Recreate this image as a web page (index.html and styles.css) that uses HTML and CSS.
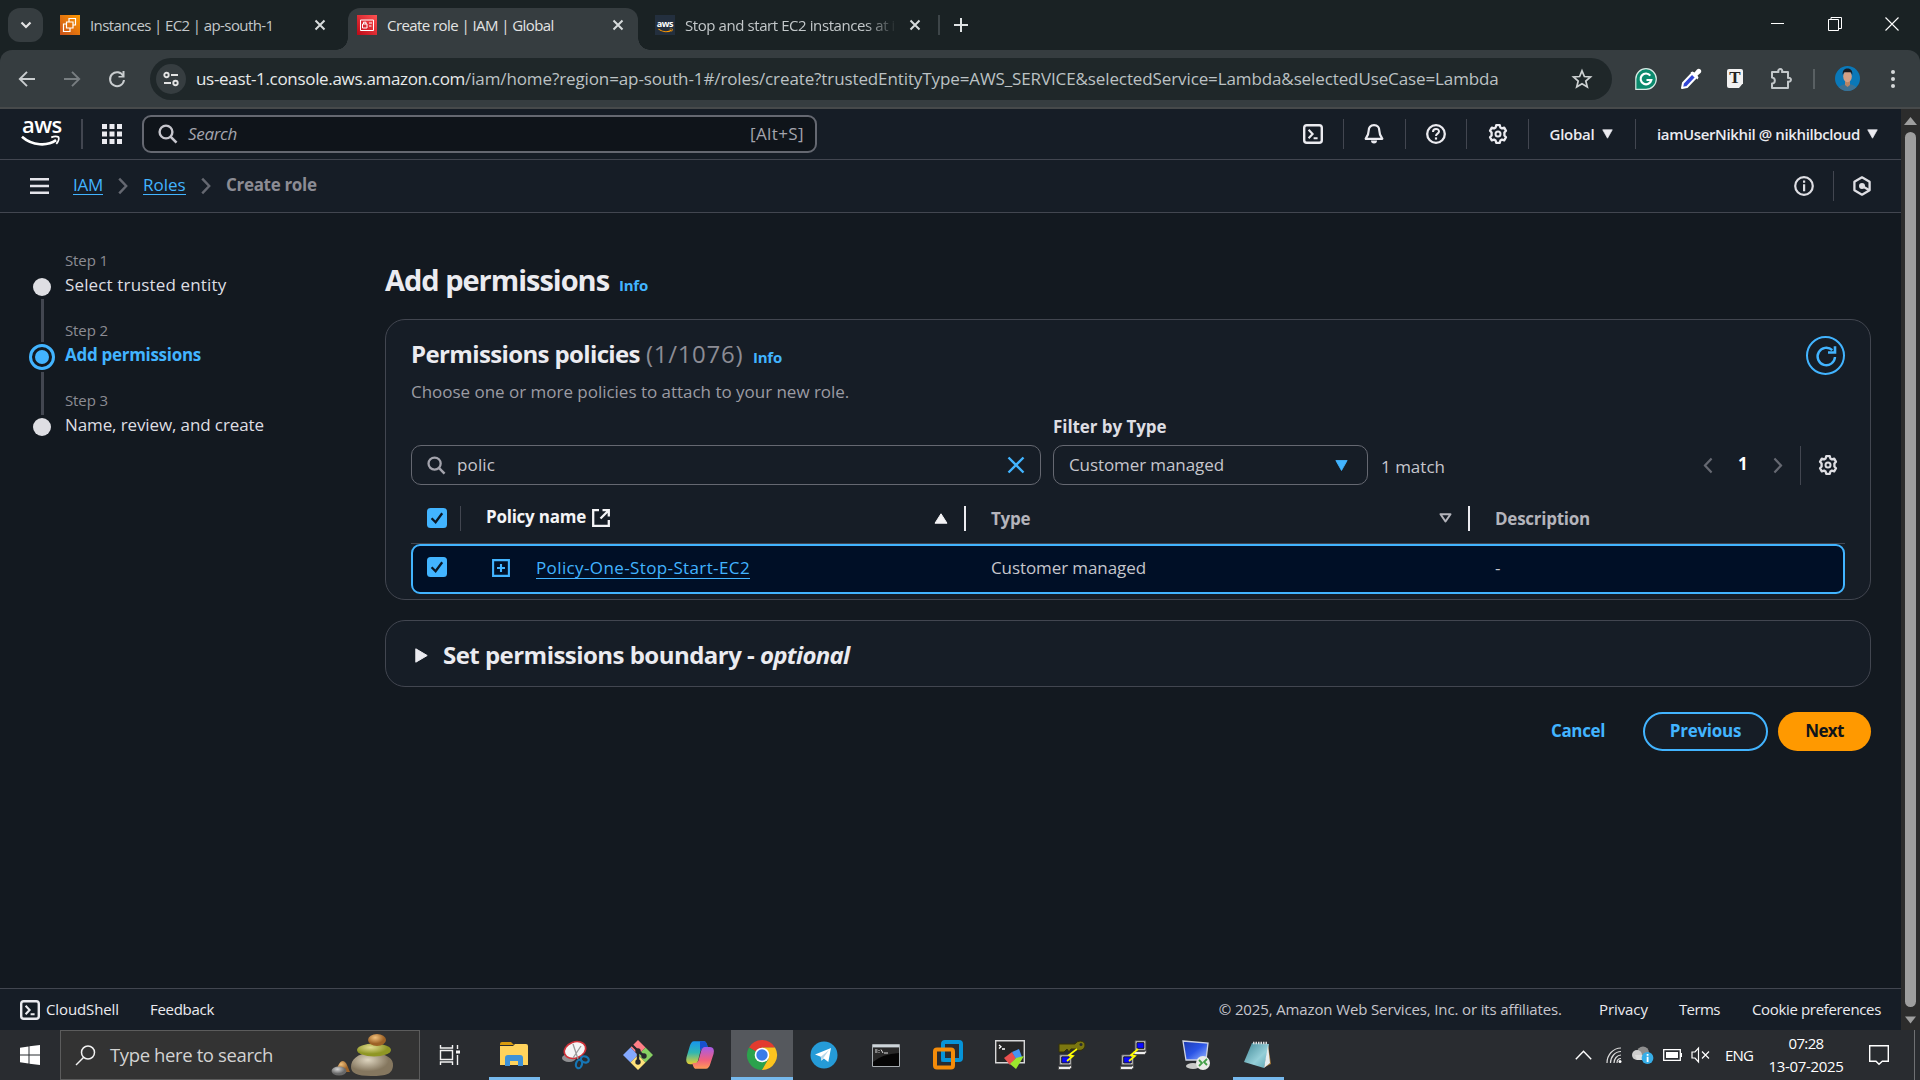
FILE: index.html
```html
<!DOCTYPE html>
<html lang="en">
<head>
<meta charset="utf-8">
<title>Create role | IAM | Global</title>
<link rel="stylesheet" href="styles.css">
</head>
<body>
<svg width="0" height="0" class="defs" aria-hidden="true">
  <defs>
    <symbol id="gear" viewBox="0 0 20 20"><path d="M8.2 1.2h3.6l.6 2.3 1.5.9 2.3-.7 1.8 3.1-1.6 1.7v3l1.6 1.7-1.8 3.1-2.3-.7-1.5.9-.6 2.3H8.2l-.6-2.3-1.5-.9-2.3.7L2 13.2l1.6-1.7v-3L2 6.8l1.8-3.1 2.3.7 1.5-.9z" fill="none" stroke="currentColor" stroke-width="2.3" stroke-linejoin="round"/><circle cx="10" cy="10" r="2.5" fill="none" stroke="currentColor" stroke-width="2"/></symbol>
    <symbol id="shell" viewBox="0 0 20 20"><rect x="1.2" y="1.2" width="17.6" height="17.6" rx="2.6" fill="none" stroke="currentColor" stroke-width="2.4"/><path d="M5.6 5.8l4 4.2-4 4.2M10.6 14.3h4" fill="none" stroke="currentColor" stroke-width="2.1"/></symbol>
    <symbol id="lens" viewBox="0 0 20 20"><circle cx="8" cy="8" r="6.4" fill="none" stroke="currentColor" stroke-width="2.4"/><path d="M12.5 12.6l6 6" stroke="currentColor" stroke-width="2.6" fill="none"/></symbol>
    <symbol id="x" viewBox="0 0 12 12"><path d="M1.5 1.5l9 9m0-9l-9 9" stroke="currentColor" stroke-width="2" fill="none"/></symbol>
    <symbol id="chev" viewBox="0 0 10 18"><path d="M1.2 1.6l7 7.4-7 7.4" stroke="currentColor" stroke-width="2.4" fill="none"/></symbol>
    <symbol id="down" viewBox="0 0 12 10"><path d="M.8.4h10.4L6 9.6z" fill="currentColor" stroke="currentColor" stroke-width=".8" stroke-linejoin="round"/></symbol>
    <symbol id="box" viewBox="0 0 20 20"><rect width="20" height="20" rx="3.5" fill="#42b4ff"/><path d="M4.6 10.2l4 4 6.6-9" fill="none" stroke="#0b1724" stroke-width="2.3"/></symbol>
    <symbol id="smile" viewBox="0 0 40 12"><path d="M1 1.6C12 11.2 27 11.4 36 5.2" fill="none" stroke="currentColor" stroke-width="2.8"/><path d="M31 2.2c3-1.2 6.2-1 7.4-.2.8 1.600-.2 4.900-2.200 7" fill="none" stroke="currentColor" stroke-width="1.900"/></symbol>
    <symbol id="pc" viewBox="0 0 16 17"><path d="M2.500 1h12v10.500h-12z" fill="#d8d8d4" stroke="#555"/><path d="M4.500 3h8v6.500h-8z" fill="#0a0aff" stroke="#111"/><path d="M1 13h12l2-1.500v3L13 16.500H1z" fill="#eee" stroke="#444"/></symbol>
  </defs>
</svg>

<div class="tabs">
  <div class="tab-search"><svg width="12" height="8" viewBox="0 0 12 8"><path d="M1.500 1.500L6 6l4.500-4.500" fill="none" stroke="#e3e3e3" stroke-width="2.200"/></svg></div>
  <div class="tab tab-first">
    <svg class="fav" width="20" height="20" viewBox="0 0 20 20"><defs><linearGradient id="og" x1="0" y1="1" x2="1" y2="0"><stop offset="0" stop-color="#c8511b"/><stop offset="1" stop-color="#f90"/></linearGradient></defs><rect width="20" height="20" fill="url(#og)"/><path d="M6.500 7h6.500v6H6.500zM9 7V3.500h6.500V10H13M6.500 9H3.500v7.500H10V13" fill="none" stroke="#fff" stroke-width="1.200"/></svg>
    <span class="tab-title t-ec2">Instances | EC2 | ap-south-1</span>
    <svg class="tab-x" width="12" height="12"><use href="#x"/></svg>
  </div>
  <div class="tab tab-active">
    <svg class="fav" width="20" height="20" viewBox="0 0 20 20"><defs><linearGradient id="rg" x1="0" y1="1" x2="1" y2="0"><stop offset="0" stop-color="#bd0816"/><stop offset="1" stop-color="#ff5252"/></linearGradient></defs><rect width="20" height="20" fill="url(#rg)"/><path d="M3.500 5h13v10.500h-13zM5.500 9h4.500v4H5.500zM6.500 9V7.200h2.500V9M12 8h3M12 11h2.500" fill="none" stroke="#fff" stroke-width="1"/></svg>
    <span class="tab-title t-iam">Create role | IAM | Global</span>
    <svg class="tab-x" width="12" height="12"><use href="#x"/></svg>
  </div>
  <div class="tab tab-third">
    <div class="fav fav-aws"><span>aws</span><svg width="15" height="5" viewBox="0 0 40 12"><use href="#smile"/></svg></div>
    <span class="tab-title t-stop">Stop and start EC2 instances at i</span>
    <svg class="tab-x" width="12" height="12"><use href="#x"/></svg>
  </div>
  <i class="tab-sep"></i>
  <svg class="plus" width="14" height="14" viewBox="0 0 14 14"><path d="M7 0v14M0 7h14" stroke="#dfe3e4" stroke-width="2"/></svg>
  <div class="win">
    <svg width="14" height="14" viewBox="0 0 14 14"><path d="M0 6.500h13" stroke="#fff"/></svg>
    <svg width="14" height="14" viewBox="0 0 14 14"><path d="M.5 2.500h10v11H.5zM3 2.500v-2h10.500v11h-3" fill="none" stroke="#fff"/></svg>
    <svg width="14" height="14" viewBox="0 0 14 14"><path d="M.5.5l13 13m0-13l-13 13" stroke="#fff" stroke-width="1.100"/></svg>
  </div>
</div>

<div class="toolbar-wrap"><div class="toolbar">
  <svg class="nav" width="18" height="18" viewBox="0 0 18 18"><path d="M17 9H2M9 1.800L1.800 9 9 16.200" fill="none" stroke="#c9cdcf" stroke-width="1.900"/></svg>
  <svg class="nav nav-off" width="18" height="18" viewBox="0 0 18 18"><path d="M1 9h15M9 1.800L16.200 9 9 16.200" fill="none" stroke="#787e81" stroke-width="1.900"/></svg>
  <svg class="nav" width="18" height="18" viewBox="0 0 18 18"><path d="M15.300 6A7 7 0 1 0 16 10" fill="none" stroke="#c9cdcf" stroke-width="2"/><path d="M16.500 1v6.500H10.500v-1.500h4V1z" fill="#c9cdcf"/></svg>
  <div class="omni">
    <div class="site"><svg width="16" height="16" viewBox="0 0 16 16"><g fill="none" stroke="#e3e3e3" stroke-width="1.900"><circle cx="3.500" cy="4" r="2.200"/><path d="M8 4h7M1 12h7"/><circle cx="12.500" cy="12" r="2.200"/></g></svg></div>
    <div class="url"><span class="host">us-east-1.console.aws.amazon.com</span><span class="path">/iam/home?region=ap-south-1#/roles/create?trustedEntityType=AWS_SERVICE&amp;selectedService=Lambda&amp;selectedUseCase=Lambda</span></div>
    <svg class="star" width="20" height="20" viewBox="0 0 20 20"><path d="M10 1.800l2.400 5.700 6.100.5-4.700 4 1.500 6L10 14.800 4.700 18l1.500-6-4.700-4 6.100-.5z" fill="none" stroke="#cdd1d2" stroke-width="1.700"/></svg>
  </div>
  <div class="exts">
    <svg class="e-g" width="22" height="22" viewBox="0 0 22 22"><path d="M11 .7A10.300 10.300 0 1 1 11 21.300H.8V11A10.200 10.200 0 0 1 11 .7z" fill="#0b8a6d" stroke="#d8ece6" stroke-width="1.200"/><path d="M15.300 7.600A5.400 5.400 0 1 0 16.300 12H11.500" fill="none" stroke="#fff" stroke-width="2.200"/></svg>
    <svg class="e-d" width="22" height="22" viewBox="0 0 22 22"><path d="M2 20l1-5 9-9.500 4 4L7 19z" fill="#3247d5" stroke="#fff" stroke-width="2" stroke-linejoin="round"/><path d="M10.500 4.500l2-1 2 1L17 1.500c1-1 2.500-1 3.500 0s1 2.500 0 3.500L17.500 7.500l1 2-1 2z" fill="#fff"/></svg>
    <div class="e-t">T</div>
    <svg class="e-p" width="22" height="22" viewBox="0 0 22 22"><path d="M2 4h6.500a2 2 0 1 1 3.500 0h6v6a2 2 0 1 1 0 3.500V20H2v-4.500c3.500 0 4-5.500 0-6z" fill="none" stroke="#c3c8ca" stroke-width="2" stroke-linejoin="round"/></svg>
    <i class="e-sep"></i>
    <svg class="e-a" width="25" height="25" viewBox="0 0 25 25"><defs><clipPath id="av"><circle cx="12.500" cy="12.500" r="12.500"/></clipPath></defs><g clip-path="url(#av)"><rect width="25" height="25" fill="#0a78b8"/><path d="M3 25c0-5 4-7 9.500-7s9.500 2 9.500 7z" fill="#3d7193"/><path d="M10 14h5v5l-2.500 2L10 19z" fill="#b98565"/><ellipse cx="12.500" cy="10.500" rx="4.300" ry="5.700" fill="#d2a086"/><path d="M7.800 9C7 4 10 2.500 12.500 2.500S18 4 17.200 9l-1.200-2.800H9z" fill="#191a20"/></g></svg>
    <svg class="e-m" width="4" height="20" viewBox="0 0 4 20" fill="#d6d9da"><circle cx="2" cy="3" r="2"/><circle cx="2" cy="10" r="2"/><circle cx="2" cy="17" r="2"/></svg>
  </div>
</div></div>

<div class="viewport">
  <div class="page">
    <header class="top">
      <div class="aws-logo"><span>aws</span><svg width="39" height="12"><use href="#smile"/></svg></div>
      <i class="vr"></i>
      <svg class="apps" width="20" height="20" viewBox="0 0 20 20" fill="#ebebf0"><path d="M0 0h5v5H0zM7.500 0h5v5h-5zM15 0h5v5h-5zM0 7.500h5v5H0zM7.500 7.500h5v5h-5zM15 7.500h5v5h-5zM0 15h5v5H0zM7.500 15h5v5h-5zM15 15h5v5h-5z"/></svg>
      <div class="top-search"><svg width="20" height="20"><use href="#lens"/></svg><em>Search</em><span>[Alt+S]</span></div>
      <div class="top-right">
        <div class="cell"><svg width="20" height="20"><use href="#shell"/></svg></div>
        <div class="cell"><svg width="20" height="20" viewBox="0 0 20 20"><path d="M10 1.200c-3.600 0-5.300 2.600-5.300 5.300 0 4-1.200 6-3 8.300h16.600c-1.800-2.300-3-4.300-3-8.300 0-2.700-1.700-5.300-5.300-5.300z" fill="none" stroke="#ebebf0" stroke-width="2.200" stroke-linejoin="round"/><path d="M7 16.500h6a3 3 0 0 1-6 0z" fill="#ebebf0"/></svg></div>
        <div class="cell"><svg width="20" height="20" viewBox="0 0 20 20"><circle cx="10" cy="10" r="8.800" fill="none" stroke="#ebebf0" stroke-width="2.300"/><path d="M7 8c0-4 6-4 6-.5 0 2.200-3 2-3 4.500" fill="none" stroke="#ebebf0" stroke-width="2"/><path d="M8.900 13.400h2.200v2.200H8.900z" fill="#ebebf0"/></svg></div>
        <div class="cell"><svg width="20" height="20"><use href="#gear"/></svg></div>
        <div class="cell cell-region"><span class="region">Global</span><svg width="11" height="10"><use href="#down"/></svg></div>
        <div class="cell cell-user"><span class="user">iamUserNikhil @ nikhilbcloud</span><svg width="11" height="10"><use href="#down"/></svg></div>
      </div>
    </header>

    <nav class="crumbs">
      <svg class="burger" width="19" height="16" viewBox="0 0 19 16"><path d="M0 1.200h19M0 8h19M0 14.800h19" stroke="#e4e4ea" stroke-width="2.400"/></svg>
      <a class="c-iam">IAM</a><svg class="c-chev" width="10" height="18"><use href="#chev"/></svg>
      <a class="c-roles">Roles</a><svg class="c-chev" width="10" height="18"><use href="#chev"/></svg>
      <b>Create role</b>
      <svg class="c-info" width="20" height="20" viewBox="0 0 20 20"><circle cx="10" cy="10" r="8.800" fill="none" stroke="#dedee3" stroke-width="2.200"/><path d="M9 4.500h2.200v2.200H9zM9 8.200h2.200v7H9z" fill="#dedee3"/></svg>
      <i class="vr"></i>
      <svg class="c-hex" width="20" height="20" viewBox="0 0 20 20"><path d="M10 1.300l7.600 4.400v8.600L10 18.700l-7.600-4.400V5.700z" fill="none" stroke="#dedee3" stroke-width="2.300" stroke-linejoin="round"/><circle cx="10" cy="10" r="3" fill="#dedee3"/><path d="M11 10.500l6 3.500" stroke="#dedee3" stroke-width="2.300"/></svg>
    </nav>

    <main>
      <ol class="steps">
        <li><div class="mark"><i class="dot"></i><i class="bar"></i></div><div><small>Step 1</small><span class="s-one">Select trusted entity</span></div></li>
        <li><div class="mark"><i class="dot dot-on"></i><i class="bar"></i></div><div><small>Step 2</small><span class="s-two">Add permissions</span></div></li>
        <li><div class="mark"><i class="dot"></i></div><div><small>Step 3</small><span class="s-three">Name, review, and create</span></div></li>
      </ol>

      <section class="content">
        <div class="head"><h1>Add permissions</h1><a class="info">Info</a></div>
        <div class="card policies">
          <div class="card-head">
            <div>
              <div class="title"><h2>Permissions policies</h2><span class="count">(1/1076)</span><a class="info">Info</a></div>
              <p>Choose one or more policies to attach to your new role.</p>
            </div>
            <div class="refresh"><svg width="22" height="22" viewBox="0 0 22 22"><path d="M17.300 5.200A8.700 8.700 0 1 0 20 12" fill="none" stroke="#42b4ff" stroke-width="2.400"/><path d="M20 1.200v6.300h-7" fill="none" stroke="#42b4ff" stroke-width="2.600"/></svg></div>
          </div>
          <div class="filters">
            <div class="field find"><svg class="lens" width="19" height="19"><use href="#lens"/></svg><span>polic</span><svg class="clear" width="18" height="18" viewBox="0 0 12 12"><path d="M1 1l10 10m0-10L1 11" stroke="#42b4ff" stroke-width="1.600"/></svg></div>
            <div class="by"><label>Filter by Type</label><div class="field select"><span>Customer managed</span><svg width="13" height="11" viewBox="0 0 12 10"><use href="#down"/></svg></div></div>
            <span class="match">1 match</span>
            <div class="pager">
              <svg class="prev" width="10" height="17" viewBox="0 0 10 18"><use href="#chev"/></svg><b>1</b><svg width="10" height="17" viewBox="0 0 10 18"><use href="#chev"/></svg><i></i><svg class="prefs" width="20" height="20"><use href="#gear"/></svg>
            </div>
          </div>
          <div class="grid thead">
            <svg class="check" width="20" height="20"><use href="#box"/></svg><i class="thin"></i>
            <div class="col-name"><b class="n-name">Policy name</b><svg width="18" height="18" viewBox="0 0 18 18"><path d="M7 1.200H1.200v15.600h15.600V11M10.500 1.200h6.300v6.300M16.500 1.500l-8 8" fill="none" stroke="#f4f4f6" stroke-width="2.300"/></svg><svg class="sort" width="14" height="11" viewBox="0 0 14 11"><path d="M7 .8L13 10.200H1z" fill="#f4f4f6" stroke="#f4f4f6" stroke-linejoin="round"/></svg><i class="thick"></i></div>
            <div class="col-type"><b>Type</b><svg class="sort" width="13" height="10" viewBox="0 0 13 10"><path d="M1.500 1.200h10l-5 7.300z" fill="none" stroke="#b4b4bb" stroke-width="2" stroke-linejoin="round"/></svg><i class="thick"></i></div>
            <div class="col-desc"><b>Description</b></div>
          </div>
          <div class="grid row">
            <svg class="check" width="20" height="20"><use href="#box"/></svg>
            <svg class="expand" width="18" height="18" viewBox="0 0 18 18"><path d="M1.100 1.100h15.800v15.800H1.100zM9 5v8M5 9h8" fill="none" stroke="#42b4ff" stroke-width="2.100"/></svg>
            <a class="policy">Policy-One-Stop-Start-EC2</a>
            <span class="managed">Customer managed</span>
            <span>-</span>
          </div>
        </div>
        <div class="card boundary"><svg width="13" height="15" viewBox="0 0 13 15"><path d="M.8.8l11.400 6.700L.8 14.200z" fill="#ebebf0" stroke="#ebebf0" stroke-linejoin="round"/></svg><h2>Set permissions boundary - <em>optional</em></h2></div>
        <div class="actions"><a>Cancel</a><button class="back">Previous</button><button class="next">Next</button></div>
      </section>
    </main>

    <footer>
      <svg width="20" height="20"><use href="#shell"/></svg><span class="f-shell">CloudShell</span><span class="f-feed">Feedback</span>
      <span class="f-copy">© 2025, Amazon Web Services, Inc. or its affiliates.</span><span class="f-priv">Privacy</span><span class="f-terms">Terms</span><span class="f-cook">Cookie preferences</span>
    </footer>
  </div>
  <div class="scroll"><svg width="13" height="8" viewBox="0 0 13 8"><path d="M6.500 0L13 8H0z" fill="#9e9e9e"/></svg><i></i><svg width="11" height="8" viewBox="0 0 13 8"><path d="M6.500 8L0 0h13z" fill="#9e9e9e"/></svg></div>
</div>

<div class="taskbar">
  <div class="start"><svg width="20" height="20" viewBox="0 0 20 20" fill="#fff"><path d="M0 2.800L8.500 1.500v8H0zM9.500 1.300L20 0v9.500H9.500zM0 10.500h8.500v8L0 17.300zM9.500 10.500H20V20L9.500 18.700z"/></svg></div>
  <div class="tsearch">
    <svg width="21" height="21" viewBox="0 0 21 21"><circle cx="13" cy="7.500" r="6.500" fill="none" stroke="#f2f2f2" stroke-width="1.500"/><path d="M8.500 12.500L1 20" stroke="#f2f2f2" stroke-width="1.500"/></svg>
    <span>Type here to search</span>
    <svg class="stones" width="64" height="43" viewBox="0 0 64 43"><defs>
      <radialGradient id="s1" cx=".4" cy=".3"><stop offset="0" stop-color="#ded5c0"/><stop offset="1" stop-color="#85775f"/></radialGradient>
      <radialGradient id="s2" cx=".4" cy=".3"><stop offset="0" stop-color="#e2dc92"/><stop offset="1" stop-color="#8f9624"/></radialGradient>
      <radialGradient id="s3" cx=".4" cy=".3"><stop offset="0" stop-color="#f0c07c"/><stop offset="1" stop-color="#9d6226"/></radialGradient>
      <radialGradient id="s4" cx=".4" cy=".3"><stop offset="0" stop-color="#d5d5d5"/><stop offset="1" stop-color="#686868"/></radialGradient></defs>
      <path d="M4 38c3-5 4-11 8-11 4 1 5 7 7 11z" fill="url(#s3)"/><ellipse cx="8" cy="37" rx="7.500" ry="4.500" fill="url(#s4)"/>
      <path d="M20 33c0-7 6-14 20-14 16 0 23 6 22 13-1 8-6 10-22 10-14 0-20-3-20-9z" fill="url(#s1)"/><ellipse cx="43" cy="16" rx="17" ry="6.500" fill="url(#s2)"/><ellipse cx="46" cy="6" rx="9" ry="6" fill="url(#s3)"/></svg>
  </div>
  <div class="apps-row">
    <div class="slot view"><svg width="22" height="20" viewBox="0 0 22 20"><path d="M1.500 0v3h12V0M1.500 20v-3h12v3M1.500 5.500h12v9h-12zM18.500 0v4M18.500 10v10" fill="none" stroke="#f2f2f2" stroke-width="1.400"/><path d="M17 5.500h4v3h-4z" fill="#f2f2f2"/></svg></div>
    <div class="slot open"><svg width="28" height="26" viewBox="0 0 28 26"><path d="M0 2q0-2 2-2h9l3 3H0z" fill="#d89a0c"/><path d="M0 4h13l2-2h11q2 0 2 2v19H0z" fill="#ffd35c"/><path d="M5 24V16q0-3 3-3h12q3 0 3 3v8h-5v-5h-8v5z" fill="#3e92d8"/></svg></div>
    <div class="slot"><svg width="28" height="28" viewBox="0 0 28 28"><ellipse cx="7" cy="17" rx="7" ry="4" fill="#8f9092"/><ellipse cx="13" cy="9" rx="11" ry="8" fill="#f5f5f5" stroke="#cf3138" stroke-width="1.600" transform="rotate(-20 13 9)"/><path d="M11 3l5 15M19 5l-8 12" stroke="#999" stroke-width="1.300"/><g fill="none" stroke="#1676b5" stroke-width="2.200"><ellipse cx="17" cy="23" rx="3" ry="4.300" transform="rotate(15 17 23)"/><ellipse cx="23" cy="18.500" rx="4" ry="3" transform="rotate(20 23 18)"/></g></svg></div>
    <div class="slot"><svg width="30" height="30" viewBox="0 0 30 30"><path d="M15 0L22.500 7.500 15 15 7.500 7.500z" fill="#ff7f86"/><path d="M7.500 7.500L15 15l-7.500 7.500L0 15z" fill="#84a9ff"/><path d="M22.500 7.500L30 15l-7.500 7.500L15 15z" fill="#86cf63"/><path d="M15 15l7.500 7.500L15 30l-7.500-7.500z" fill="#ffe27a"/><path d="M9 5l6 6v11M15 11l6 5" stroke="#26282d" stroke-width="2.400" fill="none"/><circle cx="15" cy="11" r="2.700" fill="#26282d"/><circle cx="15" cy="22" r="2.700" fill="#26282d"/><circle cx="21" cy="16" r="2.700" fill="#26282d"/></svg></div>
    <div class="slot"><svg width="28" height="30" viewBox="0 0 28 26" preserveAspectRatio="none"><defs><linearGradient id="c1" x1="0" y1="0" x2="0" y2="1"><stop offset="0" stop-color="#1695ef"/><stop offset=".5" stop-color="#31b7b1"/><stop offset="1" stop-color="#e9ce2c"/></linearGradient><linearGradient id="c2" x1="0" y1="0" x2="0" y2="1"><stop offset="0" stop-color="#a45bea"/><stop offset=".6" stop-color="#f1607d"/><stop offset="1" stop-color="#ff9b55"/></linearGradient></defs><path d="M8 1h10q2 0 3 3l1 3h-4q-3 0-4 4l-2 7q-1 3-4 3H4q-5 0-3.500-6L3.500 6Q5 1 8 1z" fill="url(#c1)"/><path d="M14 1h4q2 0 3 3l1 3h-4q-3 0-4 3z" fill="#1850cf"/><path d="M20 25H10q-2 0-3-3l-.6-2H9q3 0 4-4l2-6q1-4 4-4h5q5 0 3.600 6l-3 8Q23 25 20 25z" fill="url(#c2)"/></svg></div>
    <div class="slot current"><svg width="30" height="30" viewBox="0 0 30 30"><path d="M15 15L2 7.500A15 15 0 0 1 28 7.500H15z" fill="#e33b2e"/><path d="M15 15L2 7.500A15 15 0 0 0 15 30l6.500-11.200z" fill="#2ba24c"/><path d="M28 7.500H15l6.500 11.300L15 30A15 15 0 0 0 28 7.500z" fill="#fcc31e"/><circle cx="15" cy="15" r="7.300" fill="#fff"/><circle cx="15" cy="15" r="5.700" fill="#3a7ce8"/></svg></div>
    <div class="slot"><svg width="28" height="28" viewBox="0 0 28 28"><circle cx="14" cy="14" r="13.500" fill="#259bd7"/><path d="M5 13.500L21 7l-2.700 14-4.500-3.500-2.500 2.300-.5-4z" fill="#fff"/><path d="M10.800 15.800L19 9l-5.500 7.800-2 2.800z" fill="#b5d7ea"/></svg></div>
    <div class="slot"><svg width="28" height="23" viewBox="0 0 28 23"><path d="M.5.5h27v22H.5z" fill="#050505" stroke="#a7adb1"/><path d="M1 1h26v2.500H1z" fill="#cdd5da"/><path d="M1 4h26v5Q10 10 1 18z" fill="#292929"/><path d="M3 6h2.500M3 8h2.500M7 6v1M7 8v.8M9 5.500l2 3.500M12 9h4" stroke="#ddd"/></svg></div>
    <div class="slot"><svg width="30" height="30" viewBox="0 0 30 30"><rect x="10" y="2" width="18" height="18" rx="2" fill="none" stroke="#0694d8" stroke-width="4"/><rect x="2" y="9.500" width="18" height="18" rx="2" fill="none" stroke="#f48c0a" stroke-width="4"/><path d="M10 12v8h8" fill="none" stroke="#0694d8" stroke-width="3.500"/></svg></div>
    <div class="slot"><svg width="30" height="30" viewBox="0 0 30 30"><path d="M.7.700h28.600v22H.7z" fill="#262626" stroke="#d7d7d7" stroke-width="1.400"/><path d="M4 5l2 1.800L4 8.500M7 9h3" stroke="#fff" stroke-width="1.300" fill="none"/><path d="M9 18l8-6 4 6-6 7z" fill="#ea504e"/><path d="M17 12l7-3 3 8-6 2z" fill="#4794f1"/><path d="M15 24l6-6 8-2-8 13z" fill="#9be62d"/></svg></div>
    <div class="slot"><svg width="30" height="30" viewBox="0 0 30 30"><path d="M2 4h16c2-4 10-4 10 1s-6 7-9 4h-5l-2 3-2-3-3 3H2z" fill="#7b7710" stroke="#343108"/><circle cx="24" cy="4.500" r="1.500" fill="#292c30"/><svg x="0" y="14" width="16" height="16"><use href="#pc"/></svg><path d="M20 9l-8 6 4 1-6 5" fill="none" stroke="#ff0" stroke-width="1.700"/></svg></div>
    <div class="slot"><svg width="30" height="30" viewBox="0 0 30 30"><svg x="13" y="0" width="16" height="15"><use href="#pc"/></svg><svg x="0" y="14" width="16" height="16"><use href="#pc"/></svg><path d="M19 9l-7 6 4 1-6 5" fill="none" stroke="#ff0" stroke-width="1.700"/></svg></div>
    <div class="slot"><svg width="30" height="30" viewBox="0 0 30 30"><defs><linearGradient id="mo" x1="0" y1="0" x2="1" y2="1"><stop offset="0" stop-color="#1c39ad"/><stop offset=".5" stop-color="#2b55e6"/><stop offset="1" stop-color="#a0bcff"/></linearGradient></defs><path d="M2 1l25 2-2 17L5 20z" fill="url(#mo)" stroke="#cfd4e2" stroke-width="1.300"/><ellipse cx="12" cy="26" rx="7" ry="3" fill="#c9cac8"/><circle cx="22" cy="23" r="7" fill="#e9ece7"/><path d="M18 20l3 3-3 3M26 19l-3 3 3 3" fill="none" stroke="#43a047" stroke-width="1.800"/></svg></div>
    <div class="slot open last"><svg width="28" height="28" viewBox="0 0 28 28"><defs><linearGradient id="np" x1="0" y1="0" x2="1" y2="1"><stop offset="0" stop-color="#3f8796"/><stop offset=".6" stop-color="#95cfd8"/><stop offset="1" stop-color="#5ca6b4"/></linearGradient></defs><path d="M24 3l3 20-6 3z" fill="#a47736"/><path d="M8 2l17 1-5 24L0 21z" fill="url(#np)"/><path d="M24 4l2 18-6 5z" fill="#e5edf0"/><path d="M9 2h15" stroke="#ddd" stroke-width="2.500" stroke-dasharray="1.500 1"/></svg></div>
  </div>
  <div class="tray">
    <svg width="17" height="10" viewBox="0 0 17 10"><path d="M.8 9.300l7.700-8 7.700 8" fill="none" stroke="#fff" stroke-width="1.400"/></svg>
    <svg class="wifi" width="16" height="16" viewBox="0 0 16 16"><g fill="none" stroke="#ddd" stroke-width="1.200"><path d="M1 16C1 8 7 1 15 1M4.500 16C4.500 10 9 4.500 15 4.500M8 16c0-4 3-8 7-8M11 16c0-2.500 1.500-4.500 4-4.500"/></g><circle cx="14" cy="14.500" r="1.500" fill="#fff"/></svg>
    <svg class="cloud" width="22" height="18" viewBox="0 0 22 18"><circle cx="11" cy="6.500" r="6" fill="#8e8e8e"/><circle cx="5" cy="9" r="5" fill="#cecece"/><path d="M3 9h12v5H5z" fill="#dedede"/><circle cx="15.500" cy="12" r="5.900" fill="#36aee8"/><path d="M14.700 8h1.800v1.800h-1.800zM14.700 10.700h1.800V16h-1.800z" fill="#fff"/></svg>
    <svg class="batt" width="20" height="12" viewBox="0 0 20 12"><path d="M.7.700h16.600v10.600H.7z" fill="none" stroke="#fff" stroke-width="1.300"/><path d="M3 3h12v6H3zM17.500 4H19v4h-1.500z" fill="#fff"/></svg>
    <svg class="vol" width="20" height="16" viewBox="0 0 20 16"><path d="M1 5h3l3.500-4v14L4 11H1zM11 4.500l7 7m0-7l-7 7" fill="none" stroke="#fff" stroke-width="1.200"/></svg>
    <span class="lang">ENG</span>
    <div class="clock"><span>07:28</span><span class="date">13-07-2025</span></div>
    <svg class="note" width="20" height="20" viewBox="0 0 20 20"><path d="M.7.700h18.600v15.600h-6L10 19.300l-3-3H.7z" fill="none" stroke="#fff" stroke-width="1.400"/></svg>
    <i class="peek"></i>
  </div>
</div>
</body>
</html>
```
FILE: styles.css
```css
* { box-sizing: border-box; }
body { margin: 0; width: 1920px; height: 1080px; overflow: hidden; display: flex; flex-direction: column; background: #1a2224; color: #c6c6cd; font: 400 17px/22px "Open Sans", "Noto Sans", sans-serif; }
svg { display: block; flex: none; overflow: visible; }
i { display: block; flex: none; font-style: normal; }
h1, h2, p, ol { margin: 0; padding: 0; }
.defs { position: absolute; }

/* browser tab strip */
.tabs { height: 50px; flex: none; display: flex; align-items: flex-start; background: #1a2224; color: #c3c8ca; }
.tab-search { width: 35px; height: 34px; margin: 8px 0 0 8px; border-radius: 12px; background: #363d40; display: flex; align-items: center; justify-content: center; }
.tab { display: flex; align-items: center; height: 50px; }
.tab .fav { width: 20px; height: 20px; flex: none; margin-right: 10px; }
.tab-title { font-size: 15px; white-space: nowrap; }
.tab-x { margin-left: auto; color: #d7dbdc; }
.tab-first { width: 283px; margin-left: 17px; padding-right: 17px; }
.t-ec2 { letter-spacing: -.6px; }
.tab-active { position: relative; width: 290px; height: 42px; margin: 8px 0 0 5px; padding: 0 14px 8px 9px; background: #363d40; border-radius: 12px 12px 0 0; color: #e3e3e3; }
.tab-active::before, .tab-active::after { content: ""; position: absolute; bottom: 0; width: 12px; height: 12px; }
.tab-active::before { left: -12px; background: radial-gradient(circle at 0 0, transparent 11.500px, #363d40 12px); }
.tab-active::after { right: -12px; background: radial-gradient(circle at 100% 0, transparent 11.500px, #363d40 12px); }
.t-iam { letter-spacing: -.57px; }
.tab-third { width: 284px; padding: 0 1px 0 17px; }
.fav-aws { background: #232f3e; display: flex; flex-direction: column; align-items: center; color: #f90; }
.fav-aws span { font: 700 9px/9px "Open Sans", sans-serif; color: #fff; margin-top: 4px; letter-spacing: -.4px; }
.t-stop { letter-spacing: -.42px; -webkit-mask-image: linear-gradient(90deg, #000 180px, transparent 212px); mask-image: linear-gradient(90deg, #000 180px, transparent 212px); }
.tab-sep { width: 2px; height: 20px; margin: 15px 0 0 16px; background: #3d4548; }
.plus { margin: 18px 0 0 14px; }
.win { margin: 17px 21px 0 auto; display: flex; gap: 43px; }

/* browser toolbar */
.toolbar-wrap { height: 59px; flex: none; background: #1a2224; border-bottom: 2px solid #474a4b; }
.toolbar { height: 57px; background: #363d40; border-radius: 12px 12px 0 0; display: flex; align-items: center; padding-left: 18px; }
.nav { margin-right: 27px; }
.nav + .nav + .nav { margin-right: 24px; }
.omni { width: 1462px; height: 42px; border-radius: 21px; background: #1f2729; display: flex; align-items: center; padding: 0 20px 0 6px; margin-top: 1px; }
.site { width: 30px; height: 30px; border-radius: 50%; background: #363d40; display: flex; align-items: center; justify-content: center; }
.url { margin-left: 10px; white-space: nowrap; }
.host { color: #e8eaea; letter-spacing: -.32px; }
.path { color: #bcc2c4; letter-spacing: -.11px; }
.star { margin-left: auto; }
.exts { display: flex; align-items: center; flex: 1; }
.e-g { margin-left: 23px; }
.e-d { margin-left: 23px; }
.e-t { margin-left: 25px; width: 16px; height: 19px; border-radius: 2px; background: #f2f2f2; color: #222; text-align: center; font: 700 17px/18px "Liberation Serif", serif; clip-path: polygon(0 0, 100% 0, 100% 75%, 75% 100%, 0 100%); }
.e-p { margin-left: 27px; }
.e-sep { width: 2px; height: 20px; margin-left: 21px; background: #596063; }
.e-a { margin-left: 20px; }
.e-m { margin-left: 31px; }

/* console page */
.viewport { height: 921px; flex: none; display: flex; }
.page { width: 1901px; display: flex; flex-direction: column; background: #131920; }
.scroll { width: 19px; background: #2c2c2c; display: flex; flex-direction: column; align-items: center; padding: 8px 0 7px; }
.scroll i { width: 11px; height: 875px; margin: 7px 0 9px; border-radius: 6px; background: #9e9e9e; }
.vr { width: 1px; height: 30px; background: #424650; }
.top { height: 51px; flex: none; border-bottom: 1px solid #424650; background: #161d26; display: flex; align-items: center; color: #ebebf0; }
.aws-logo { width: 39px; margin-left: 21px; color: #fff; }
.aws-logo span { display: block; font: 600 22px/17px "Open Sans", sans-serif; letter-spacing: -.6px; margin: -5px 0 2px 1px; }
.top > .vr { margin-left: 21px; width: 2px; }
.apps { margin-left: 19px; }
.top-search { width: 675px; height: 38px; margin-left: 20px; border: 2px solid #656871; border-radius: 9px; background: #0f141a; display: flex; align-items: center; padding: 0 11px 0 14px; color: #c6c6cd; }
.top-search em { margin-left: 10px; letter-spacing: -.31px; color: #a4a4ad; }
.top-search span { margin-left: auto; letter-spacing: .39px; color: #a4a4ad; }
.top-right { margin-left: auto; display: flex; }
.cell { width: 61.700px; height: 30px; border-right: 1px solid #424650; display: flex; align-items: center; justify-content: center; }
.cell-region { width: 107px; font-size: 15px; font-weight: 600; gap: 7px; padding-right: 2px; }
.cell-user { width: 265px; font-size: 15px; font-weight: 600; border: 0; gap: 7px; padding-right: 2px; }
.region { letter-spacing: -.24px; }
.user { letter-spacing: -.38px; }
.crumbs { height: 53px; flex: none; border-bottom: 1px solid #424650; background: #161d26; display: flex; align-items: center; padding: 0 29px 0 30px; }
.crumbs a { color: #42b4ff; border-bottom: 1px solid #42b4ff; line-height: 20px; height: 20px; margin-top: -2px; }
.crumbs b { font-weight: 700; color: #8c8c94; letter-spacing: -.32px; margin: -3px 0 0 15px; }
.crumbs .c-iam { margin-left: 24px; letter-spacing: -.27px; width: 30px; }
.crumbs .c-roles { margin-left: 15px; width: 43px; }
.c-chev { margin-left: 15px; color: #656871; }
.c-info { margin-left: auto; }
.crumbs .vr { margin-left: 19px; }
.c-hex { margin-left: 18px; }

main { flex: 1; display: flex; padding-top: 37px; }
.steps { list-style: none; width: 385px; padding-left: 29px; }
.steps li { display: flex; height: 70px; }
.mark { width: 26px; margin-right: 10px; display: flex; flex-direction: column; align-items: center; padding-top: 28px; }
.steps small { display: block; font-size: 15px; line-height: 22px; margin-top: -1px; color: #8c8c94; letter-spacing: -.11px; }
.steps span { display: block; line-height: 24px; margin-top: 2px; color: #dedee3; }
.steps .s-one { letter-spacing: .15px; }
.steps .s-two { font-weight: 700; color: #42b4ff; letter-spacing: -.29px; }
.steps .s-three { letter-spacing: -.11px; }
.dot { width: 18px; height: 18px; border-radius: 50%; background: #dedee3; }
.bar { width: 3px; height: 43px; background: #424650; margin-top: 3px; }
.dot-on { width: 26px; height: 26px; margin-top: -4px; border: 3px solid #42b4ff; background: #42b4ff; background-clip: content-box; padding: 3px; }
.dot-on + .bar { margin-top: 2px; }
.content { width: 1486px; }
.head { display: flex; align-items: baseline; height: 69px; padding-top: 12px; }
h1 { font-size: 29px; line-height: 36px; color: #ebebf0; letter-spacing: -1.020px; width: 234px; white-space: nowrap; }
.info { color: #42b4ff; font-size: 15px; font-weight: 700; letter-spacing: -.23px; }
.card { background: #161d26; border: 1px solid #424650; border-radius: 20px; }
.policies { height: 281px; padding: 16px 25px 5px; display: flex; flex-direction: column; }
.card-head { display: flex; justify-content: space-between; }
.title { display: flex; align-items: baseline; line-height: 36px; }
h2 { font-size: 24px; line-height: 36px; color: #ebebf0; letter-spacing: -.63px; white-space: nowrap; }
.title h2 { width: 235px; }
.count { font-size: 24px; color: #8c8c94; letter-spacing: .7px; width: 107px; }
.card-head p { margin-top: 6px; line-height: 22px; letter-spacing: -.02px; color: #9b9ba3; }
.refresh { width: 39px; height: 39px; border: 2px solid #42b4ff; border-radius: 50%; display: flex; align-items: center; justify-content: center; }
.filters { display: flex; align-items: flex-end; margin-top: 13px; }
.field { height: 40px; border: 1px solid #656871; border-radius: 10px; display: flex; align-items: center; }
.find { width: 630px; padding: 0 15px; color: #c6c6cd; }
.lens { color: #a4a4ad; }
.find span { margin-left: 11px; letter-spacing: .13px; }
.clear { margin-left: auto; }
.by { margin-left: 12px; display: flex; flex-direction: column; }
label { font-weight: 700; color: #dedee3; letter-spacing: -.07px; margin-bottom: 7px; }
.select { width: 315px; padding: 0 19px 0 15px; justify-content: space-between; letter-spacing: -.09px; }
.select svg { color: #42b4ff; }
.match { margin: 0 0 7px 13px; }
.pager { margin-left: auto; display: flex; align-items: center; height: 40px; padding-right: 7px; color: #656871; }
.pager .prev { transform: scaleX(-1); margin-right: 25px; }
.pager b { color: #fff; width: 10px; margin-right: 25px; padding-bottom: 2px; }
.pager i { width: 1px; height: 39px; background: #424650; margin: 0 17px; }
.prefs { color: #dedee3; }
.grid { display: grid; align-items: center; }
.thead { height: 59px; flex: none; padding: 8px 0 0 16px; grid-template-columns: 33px 26px 505px 504px auto; border-bottom: 1px solid #424650; color: #b4b4bb; }
.thead b { font-weight: 700; letter-spacing: -.25px; }
.thead .n-name { color: #f4f4f6; letter-spacing: -.24px; margin: -2px 6px 0 0; }
.col-type b, .col-desc b { padding-top: 2px; }
.col-desc { display: flex; }
.thin { width: 1px; height: 25px; background: #424650; }
.thick { width: 2px; height: 25px; background: #ebebf0; margin: 0 25px 0 16px; }
.col-name, .col-type { display: flex; align-items: center; }
.col-name .sort, .col-type .sort { margin-left: auto; }
.row { height: 50px; flex: none; border: 2px solid #42b4ff; border-radius: 9px; background: #000f26; grid-template-columns: 65px 44px 455px 504px auto; padding: 0 0 2px 14px; }
.row .check { margin-bottom: 2px; }
.policy { justify-self: start; color: #42b4ff; letter-spacing: .38px; border-bottom: 1px solid #42b4ff; line-height: 20px; margin-top: 1px; }
.row .managed { letter-spacing: -.09px; }
.boundary { margin-top: 20px; height: 67px; display: flex; align-items: center; padding: 2px 0 0 29px; }
.boundary svg { margin-top: 2px; }
.boundary h2 { margin-left: 15px; letter-spacing: -.53px; }
.boundary em { letter-spacing: -.7px; }
.actions { margin-top: 25px; display: flex; justify-content: flex-end; align-items: center; font-weight: 700; }
.actions a { color: #42b4ff; letter-spacing: -.38px; margin-right: 38px; padding-bottom: 1px; }
button { font: inherit; height: 39px; border-radius: 20px; padding: 0 0 1px; }
.back { width: 125px; background: #161d26; border: 2px solid #42b4ff; color: #42b4ff; letter-spacing: -.25px; }
.next { width: 93px; background: #f90; border: 0; color: #0f141a; letter-spacing: -.6px; margin-left: 10px; }

footer { height: 42px; flex: none; border-top: 1px solid #424650; background: #161d26; display: flex; align-items: center; padding: 0 20px; font-size: 15px; color: #ebebf0; white-space: nowrap; }
footer span { padding-bottom: 2px; }
.f-shell { margin-left: 6px; letter-spacing: -.11px; }
.f-feed { margin-left: 31px; letter-spacing: -.29px; }
.f-copy { margin-left: auto; letter-spacing: -.13px; color: #c6c6cd; }
.f-priv { margin-left: 37px; letter-spacing: -.07px; }
.f-terms { margin-left: 31px; letter-spacing: -.57px; }
.f-cook { margin-left: 32px; letter-spacing: -.34px; }

/* desktop taskbar */
.taskbar { height: 50px; flex: none; background: #292c30; display: flex; }
.start { width: 60px; display: flex; align-items: center; justify-content: center; }
.tsearch { width: 360px; border: 1px solid #5c5c5c; background: #333; display: flex; align-items: center; padding-left: 14px; color: #d2d2d2; font-size: 18.500px; letter-spacing: -.38px; }
.tsearch span { margin-left: 14px; padding-bottom: 1px; }
.stones { margin-left: 58px; }
.apps-row { display: flex; margin-left: -1px; }
.slot { width: 62px; padding: 0 1px; display: flex; align-items: center; justify-content: center; }
.view { margin-right: 2px; }
.open { background: linear-gradient(#76b9ed, #76b9ed) center bottom / 51px 3px no-repeat; }
.current { background: linear-gradient(#76b9ed, #76b9ed) bottom / 100% 3px no-repeat, #55585d; }
.tray { margin-left: auto; display: flex; align-items: center; color: #fff; font-size: 15px; }
.wifi { margin-left: 14px; }
.cloud { margin-left: 10px; }
.batt { margin-left: 9px; }
.vol { margin-left: 8px; }
.lang { margin-left: 14px; letter-spacing: -.85px; }
.clock { width: 106px; display: flex; flex-direction: column; align-items: center; line-height: 23px; letter-spacing: -.65px; }
.date { letter-spacing: -.33px; }
.note { margin-left: 10px; }
.peek { width: 1px; height: 50px; margin: 0 5px 0 25px; background: #6e7073; }
```
